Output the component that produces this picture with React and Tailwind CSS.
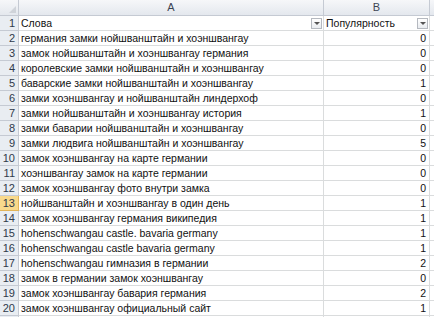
const rows = [
  ['германия замки нойшванштайн и хоэншвангау', 0],
  ['замок нойшванштайн и хоэншвангау германия', 0],
  ['королевские замки нойшванштайн и хоэншвангау', 0],
  ['баварские замки нойшванштайн и хоэншвангау', 1],
  ['замки хоэншвангау и нойшванштайн линдерхоф', 0],
  ['замки нойшванштайн и хоэншвангау история', 1],
  ['замки баварии нойшванштайн и хоэншвангау', 0],
  ['замки людвига нойшванштайн и хоэншвангау', 5],
  ['замок хоэншвангау на карте германии', 0],
  ['хоэншвангау замок на карте германии', 0],
  ['замок хоэншвангау фото внутри замка', 0],
  ['нойшванштайн и хоэншвангау в один день', 1],
  ['замок хоэншвангау германия википедия', 1],
  ['hohenschwangau castle. bavaria germany', 1],
  ['hohenschwangau castle bavaria germany', 1],
  ['hohenschwangau гимназия в германии', 2],
  ['замок в германии замок хоэншвангау', 0],
  ['замок хоэншвангау бавария германия', 2],
  ['замок хоэншвангау официальный сайт', 1],
];

function FilterButton() {
  return (
    <div className="w-[11px] h-[11px] border border-[#b5b9c0] bg-gradient-to-b from-white to-[#e9ecf0] flex items-center justify-center shrink-0">
      <div className="w-0 h-0 border-l-[3px] border-r-[3px] border-t-[3px] border-l-transparent border-r-transparent border-t-[#555]" />
    </div>
  );
}

function RowHead({ n }) {
  const active = n === 13;
  return (
    <div
      className={`h-[15px] border-b border-r flex items-center justify-end pr-[3px] text-[11px] text-[#2f3a4a] ${
        active ? 'bg-[#f8d98c] border-[#e2b457]' : 'bg-[#e9edf2] border-[#c5cad3]'
      }`}
    >
      {n}
    </div>
  );
}

export default function App() {
  return (
    <div
      className="w-[434px] h-[317px] overflow-hidden bg-white text-[10.5px] leading-none text-[#111]"
      style={{ fontFamily: '"Liberation Sans", Arial, sans-serif' }}
    >
      <div className="grid grid-cols-[19px_305px_106px_4px]">
        {/* column headers */}
        <div className="h-[16px] border-b border-r border-[#c5cad3] bg-gradient-to-b from-[#f6f7f9] to-[#e4e8ee] flex items-end justify-end p-[2px]">
          <div className="w-0 h-0 border-b-[7px] border-l-[7px] border-l-transparent border-b-[#cfd3d9]" />
        </div>
        <div className="h-[16px] border-b border-r border-[#c5cad3] bg-gradient-to-b from-[#f6f7f9] to-[#e4e8ee] flex items-center justify-center text-[11px] text-[#3b4453]">A</div>
        <div className="h-[16px] border-b border-r border-[#c5cad3] bg-gradient-to-b from-[#f6f7f9] to-[#e4e8ee] flex items-center justify-center text-[11px] text-[#3b4453]">B</div>
        <div className="h-[16px] border-b border-[#c5cad3] bg-gradient-to-b from-[#f6f7f9] to-[#e4e8ee]" />

        {/* row 1 */}
        <RowHead n={1} />
        <div className="h-[15px] border-b border-r border-[#dadcdd] flex items-center justify-between pl-[2px] pr-[1px]">
          <span>Слова</span>
          <FilterButton />
        </div>
        <div className="h-[15px] border-b border-r border-[#dadcdd] flex items-center justify-between pl-[2px] pr-[1px]">
          <span>Популярность</span>
          <FilterButton />
        </div>
        <div className="h-[15px] border-b border-[#dadcdd]" />

        {rows.map(([text, value], i) => (
          <Row key={i} n={i + 2} text={text} value={value} />
        ))}

        <div className="h-[15px] border-r border-[#c5cad3] bg-[#e9edf2]" />
        <div className="h-[15px] border-r border-[#dadcdd]" />
        <div className="h-[15px] border-r border-[#dadcdd]" />
        <div className="h-[15px]" />
      </div>
    </div>
  );
}

function Row({ n, text, value }) {
  return (
    <>
      <RowHead n={n} />
      <div className="h-[15px] border-b border-r border-[#dadcdd] flex items-center pl-[2px] whitespace-nowrap overflow-hidden">
        {text}
      </div>
      <div className="h-[15px] border-b border-r border-[#dadcdd] flex items-center justify-end pr-[3px]">
        {value}
      </div>
      <div className="h-[15px] border-b border-[#dadcdd]" />
    </>
  );
}
